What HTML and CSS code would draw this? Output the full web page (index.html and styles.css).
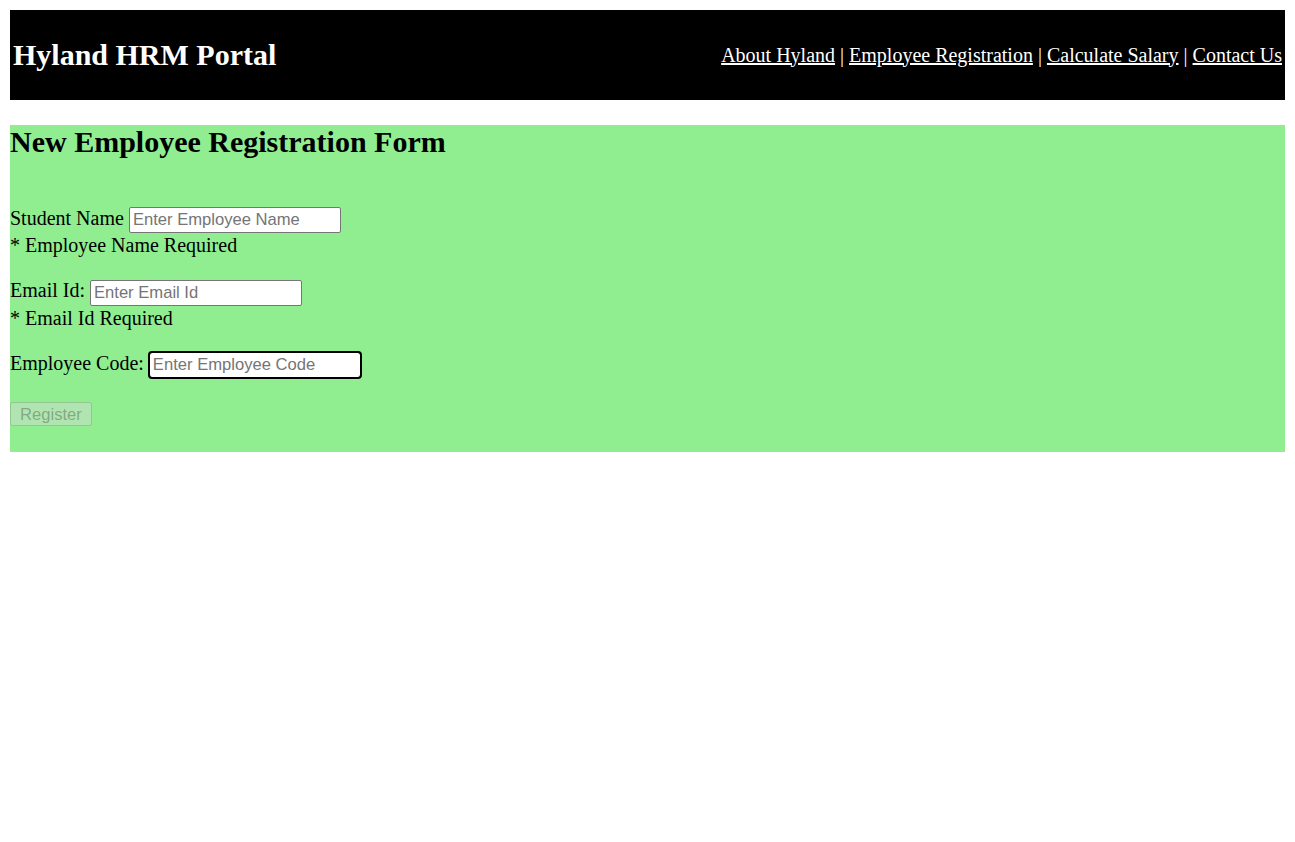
FILE: index.html
```html
<!DOCTYPE html>
<html>
<head>
<meta charset="utf-8">
<title>Hyland HRM Portal</title>
<link rel="stylesheet" href="styles.css">
</head>
<body>
<header class="topbar">
  <h1 class="brand">Hyland HRM Portal</h1>
  <nav class="nav">
    <a href="#">About Hyland</a> | <a href="#">Employee Registration</a> | <a href="#">Calculate Salary</a> | <a href="#">Contact Us</a>
  </nav>
</header>
<section class="panel">
  <h2 class="title">New Employee Registration Form</h2>
  <form class="form">
    <div class="field">
      <div>Student Name <input class="inp inp-name" type="text" placeholder="Enter Employee Name"></div>
      <div class="err">* Employee Name Required</div>
    </div>
    <div class="field">
      <div>Email Id: <input class="inp" type="text" placeholder="Enter Email Id"></div>
      <div class="err">* Email Id Required</div>
    </div>
    <div class="field">
      <div>Employee Code: <input class="inp focus" type="text" placeholder="Enter Employee Code"></div>
    </div>
    <div class="field field-btn">
      <button class="btn" type="button" disabled>Register</button>
    </div>
  </form>
</section>
</body>
</html>
```
FILE: styles.css
```css
body {
  margin: 10px;
  font-family: "Liberation Serif", "Times New Roman", serif;
  font-size: 20px;
  color: #000;
}
.topbar {
  background: #000;
  color: #fff;
  height: 90px;
  display: flex;
  align-items: center;
  justify-content: space-between;
  padding: 0 3px;
}
.brand {
  margin: 0;
  font-size: 30px;
  font-weight: bold;
}
.nav {
  font-size: 20px;
}
.nav a {
  color: #fff;
}
.panel {
  margin-top: 25px;
  background: #90ee90;
  padding-bottom: 6px;
}
.title {
  margin: 0 0 46px 0;
  font-size: 30px;
}
.field {
  margin-bottom: 20px;
  line-height: 26px;
}
.err {
  line-height: 24px;
}
.field-btn {
  padding-top: 2px;
}
.inp {
  width: 212px;
  height: 26px;
  box-sizing: border-box;
  font-family: "Liberation Sans", Arial, sans-serif;
  font-size: 16.6px;
  padding: 1px 3px;
  border: 1px solid #767676;
  border-radius: 2px;
  vertical-align: middle;
}
.inp::placeholder {
  color: #757575;
}
.focus {
  outline: 2px solid #000;
  outline-offset: -1px;
  border-radius: 3px;
}
.btn {
  font-family: "Liberation Sans", Arial, sans-serif;
  font-size: 16.6px;
  padding: 1px 8px;
  height: 24px;
}
```
